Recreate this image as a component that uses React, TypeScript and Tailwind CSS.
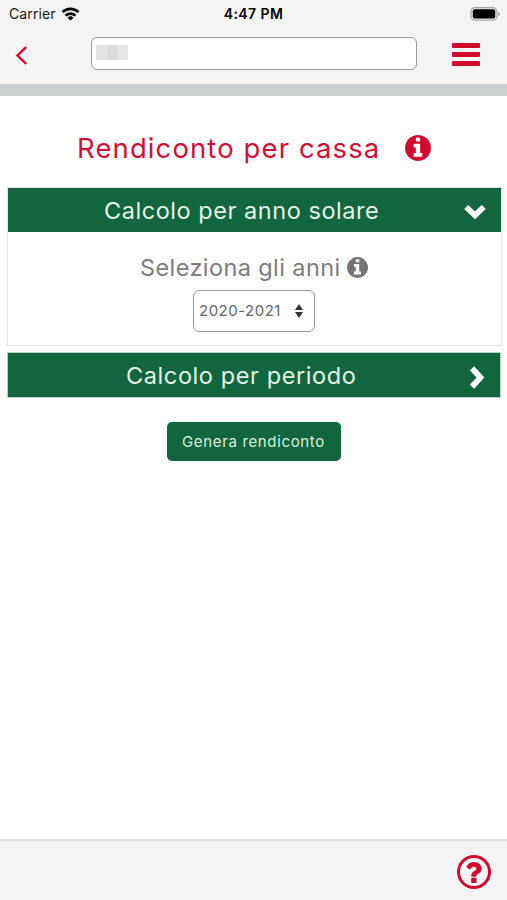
import React from 'react';

function InfoCircle({ className }: { className: string }) {
  return (
    <svg className={className} viewBox="128 128 1536 1536" fill="currentColor">
      <path d="M1152 1376v-160q0-14-9-23t-23-9h-96v-512q0-14-9-23t-23-9h-320q-14 0-23 9t-9 23v160q0 14 9 23t23 9h96v320h-96q-14 0-23 9t-9 23v160q0 14 9 23t23 9h448q14 0 23-9t9-23zm-128-896v-160q0-14-9-23t-23-9h-192q-14 0-23 9t-9 23v160q0 14 9 23t23 9h192q14 0 23-9t9-23zm640 416q0 209-103 385.500t-279.500 279.500-385.500 103-385.500-103-279.500-279.500-103-385.500 103-385.500 279.500-279.500 385.500-103 385.500 103 279.500 279.500 103 385.500z" />
    </svg>
  );
}

function QuestionMark({ className }: { className: string }) {
  return (
    <svg className={className} viewBox="470 256 934 1280" fill="currentColor">
      <path d="M1088 1256v240q0 16-12 28t-28 12h-240q-16 0-28-12t-12-28v-240q0-16 12-28t28-12h240q16 0 28 12t12 28zm316-600q0 54-15.500 101t-35 76.500-55 59.500-57.500 43.500-61 35.500q-41 23-68.500 65t-27.500 67q0 17-12 32.500t-28 15.500h-240q-15 0-25.500-18.500t-10.500-37.500v-45q0-83 65-156.500t143-108.500q59-27 84-56t25-76q0-42-46.500-74t-107.500-32q-65 0-108 29-35 25-107 115-13 16-31 16-12 0-25-8l-164-125q-13-10-15.500-25t5.500-28q160-266 464-266 80 0 161 31t146 83 106 127.500 41 158.500z" />
    </svg>
  );
}

function StatusBar() {
  return (
    <div className="grid h-[28px] grid-cols-3 items-center text-[14px] leading-none text-[#161616]">
      <div className="flex items-center gap-[5px] pl-[9px]">
        <span className="tracking-[0.12px]">Carrier</span>
        <svg width="19" height="14" viewBox="0 0 18 14" fill="none" stroke="#000" strokeWidth="2.6">
          <path d="M1 5.1a11.5 11.5 0 0 1 16 0" />
          <path d="M4 8.6a7.3 7.3 0 0 1 10 0" />
          <path d="M9 13.6 6 10.7a4.3 4.3 0 0 1 6 0z" fill="#000" stroke="none" />
        </svg>
      </div>
      <span className="text-center font-semibold tracking-[0.4px] text-black">4:47 PM</span>
      <div className="flex justify-end pr-[6px]">
        <svg width="31" height="14" viewBox="0 0 31 14">
          <rect x="0.9" y="0.6" width="26" height="12.6" rx="4" fill="#e6e6e6" stroke="#a3a3a3" strokeWidth="1.1" />
          <rect x="2.8" y="2.3" width="22.4" height="9.2" rx="2" fill="#000" />
          <path d="M28.2 4.8c2.2.6 2.2 3.8 0 4.4z" fill="#a3a3a3" />
        </svg>
      </div>
    </div>
  );
}

function Toolbar() {
  return (
    <div className="flex h-[56px] items-start">
      <button className="flex w-[91px] pl-[15px] pt-[18px]" aria-label="Indietro">
        <svg width="13" height="19" viewBox="0 0 13 19" fill="none" stroke="#d20a2e" strokeWidth="2.4">
          <path d="M11.200 1.2 2.5 9.5 11.200 17.8" />
        </svg>
      </button>
      <div className="mt-[9px] h-[33px] w-[326px] rounded-[6px] border-[1.5px] border-[#999] bg-white pl-[4px] pt-[7px]">
        <div className="flex h-[15px] w-[32px]">
          <div className="w-[11px] bg-[#e3e3e3]" />
          <div className="w-[11px] bg-[#dddddd]" />
          <div className="w-[10px] bg-[#e6e6e6]" />
        </div>
      </div>
      <button className="ml-[35px] mt-[14.5px] flex flex-col gap-[4px]" aria-label="Menu">
        <span className="h-[5px] w-[28px] rounded-[1px] bg-[#cf0a2c]" />
        <span className="h-[5px] w-[28px] rounded-[1px] bg-[#cf0a2c]" />
        <span className="h-[5px] w-[28px] rounded-[1px] bg-[#cf0a2c]" />
      </button>
    </div>
  );
}

export default function App() {
  return (
    <div className="flex h-[900px] w-[507px] flex-col overflow-hidden bg-white font-['Inter','Liberation_Sans',sans-serif]">
      <header className="h-[96px] shrink-0 border-b-[12px] border-[#cbcfd0] bg-[#f4f4f4]">
        <StatusBar />
        <Toolbar />
      </header>

      <main className="flex-1 px-[7px]">
        <div className="flex h-[91px] items-center pl-[70px] pt-[13px]">
          <h1 className="w-[328px] whitespace-nowrap pt-px text-[27.5px] leading-none tracking-[1.1px] text-[#d20f35]">
            Rendiconto per cassa
          </h1>
          <InfoCircle className="size-[26px] text-[#d20a2e]" />
        </div>

        <section className="h-[159px] w-[495px] border border-[#e4e4e4]">
          <div className="flex h-[44px] w-[493px] items-center bg-[#12653f] pl-[96px] text-[23.5px] leading-none tracking-[0.55px] text-[#e4f6e6]">
            <span className="w-[360px] whitespace-nowrap pt-px">Calcolo per anno solare</span>
            <svg className="mt-[4px]" width="22" height="16" viewBox="0 0 22 16" fill="none" stroke="#fff" strokeWidth="5.8">
              <path d="M2.2 3 11 11.3 19.8 3" />
            </svg>
          </div>
          <div className="flex h-[58px] items-center pl-[132px] pt-[12px]">
            <span className="w-[207px] whitespace-nowrap pt-px text-[23.5px] leading-none tracking-[0.4px] text-[#7c7c7c]">
              Seleziona gli anni
            </span>
            <InfoCircle className="size-[21px] text-[#757575]" />
          </div>
          <button className="ml-[185px] flex h-[42px] w-[122px] items-center rounded-[6px] border-[1.5px] border-[#999] bg-white pl-[5px] text-[15px] leading-none text-[#666]">
            <span className="w-[96px] pb-px text-left tracking-[0.5px]">2020-2021</span>
            <svg width="8" height="14" viewBox="0 0 8 14" fill="#333">
              <path d="M4 0 8 6H0zM4 14 0 8h8z" />
            </svg>
          </button>
        </section>

        <section className="mt-[6px] flex h-[46px] w-[494px] items-center border border-[#b9d2c6] bg-[#12653f] pl-[118px] text-[23.5px] leading-none tracking-[0.6px] text-[#e4f6e6]">
          <span className="w-[343px] whitespace-nowrap pt-px">Calcolo per periodo</span>
          <svg className="mt-[5px]" width="16" height="23" viewBox="0 0 16 23" fill="none" stroke="#fff" strokeWidth="5.8">
            <path d="M3 2.3 11.5 11.5 3 20.700" />
          </svg>
        </section>

        <button className="ml-[160px] mt-[24px] flex h-[39px] w-[174px] items-center rounded-[5px] bg-[#12653f] pl-[15px] text-[15px] leading-none tracking-[0.65px] text-[#d9f0df]">
          <span className="whitespace-nowrap">Genera rendiconto</span>
        </button>
      </main>

      <footer className="flex h-[61px] shrink-0 items-center justify-end border-t-2 border-[#dedede] bg-[#f4f4f4] pr-[16px] pt-[3px]">
        <button className="flex size-[34px] items-center justify-center rounded-full border-[3px] border-[#d20a2e]" aria-label="Aiuto">
          <QuestionMark className="h-[21px] w-[16px] text-[#d20a2e]" />
        </button>
      </footer>
    </div>
  );
}
